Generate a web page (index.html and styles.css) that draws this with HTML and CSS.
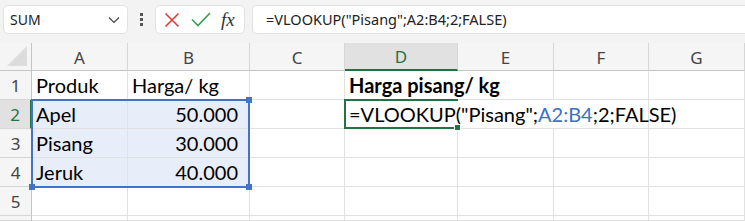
FILE: index.html
```html
<!DOCTYPE html>
<html lang="id">
<head>
    <meta charset="UTF-8">
    <title>VLOOKUP</title>
    <link rel="stylesheet" href="styles.css">
</head>
<body>
    <div class="toolbar">
        <div class="namebox">
            <span>SUM</span>
            <svg width="12" height="8" viewBox="0 0 12 8"><path d="M1 1.5 L6 6.5 L11 1.5" fill="none" stroke="#444" stroke-width="1.2"/></svg>
        </div>
        <div class="grip"><i></i><i></i><i></i></div>
        <div class="fxbox">
            <svg width="16" height="16" viewBox="0 0 16 16"><path d="M1.5 1.5 L14.5 14.5 M14.5 1.5 L1.5 14.5" stroke="#e03c3c" stroke-width="1.6"/></svg>
            <svg width="20" height="15" viewBox="0 0 20 15"><path d="M1 7.5 L7 13.5 L19 1" fill="none" stroke="#3a9d55" stroke-width="1.7"/></svg>
            <span class="fx">fx</span>
        </div>
        <div class="formula">=VLOOKUP("Pisang";A2:B4;2;FALSE)</div>
    </div>

    <div class="sheet">
        <div class="hd corner"><div class="tri"></div></div>
        <div class="hd col">A</div>
        <div class="hd col">B</div>
        <div class="hd col">C</div>
        <div class="hd col active">D</div>
        <div class="hd col">E</div>
        <div class="hd col">F</div>
        <div class="hd col">G</div>

        <div class="hd row">1</div>
        <div class="c">Produk</div>
        <div class="c">Harga/ kg</div>
        <div class="c"></div>
        <div class="c bold span2">Harga pisang/ kg</div>
        <div class="c"></div>
        <div class="c"></div>

        <div class="hd row active">2</div>
        <div class="c sel">Apel</div>
        <div class="c sel num">50.000</div>
        <div class="c"></div>
        <div class="c span3 over">=VLOOKUP("Pisang";<span class="ref">A2:B4</span>;2;FALSE)</div>
        <div class="c"></div>

        <div class="hd row">3</div>
        <div class="c sel">Pisang</div>
        <div class="c sel num">30.000</div>
        <div class="c"></div>
        <div class="c"></div>
        <div class="c"></div>
        <div class="c"></div>
        <div class="c"></div>

        <div class="hd row">4</div>
        <div class="c sel">Jeruk</div>
        <div class="c sel num">40.000</div>
        <div class="c"></div>
        <div class="c"></div>
        <div class="c"></div>
        <div class="c"></div>
        <div class="c"></div>

        <div class="hd row">5</div>
        <div class="c"></div>
        <div class="c"></div>
        <div class="c"></div>
        <div class="c"></div>
        <div class="c"></div>
        <div class="c"></div>
        <div class="c"></div>

        <div class="hd row"></div>
        <div class="c"></div>
        <div class="c"></div>
        <div class="c"></div>
        <div class="c"></div>
        <div class="c"></div>
        <div class="c"></div>
        <div class="c"></div>

        <!-- range highlight A2:B4 -->
        <div class="range">
            <i class="h tr"></i><i class="h bl"></i><i class="h br"></i>
        </div>
        <!-- active cell D2 -->
        <div class="cursor"><i class="fill"></i></div>
    </div>
</body>
</html>
```

FILE: styles.css
```css
body {
    margin: 0;
    width: 745px;
    height: 221px;
    overflow: hidden;
    background: #fff;
}
.toolbar {
    display: flex;
    align-items: center;
    height: 43px;
    padding: 0 0 4px 3px;
    box-sizing: border-box;
    background: #f3f3f3;
    font-family: "Noto Sans", "Open Sans", sans-serif;
    color: #222;
}
.namebox {
    display: flex;
    align-items: center;
    justify-content: space-between;
    width: 125px;
    height: 29px;
    box-sizing: border-box;
    padding: 0 7px 0 6px;
    background: #fff;
    border: 1px solid #e2e2e2;
    border-radius: 5px;
    font-size: 14px;
}
.grip {
    display: flex;
    flex-direction: column;
    gap: 2px;
    width: 27px;
    align-items: center;
}
.grip i {
    display: block;
    width: 3px;
    height: 3px;
    background: #555;
}
.fxbox {
    display: flex;
    align-items: center;
    gap: 11px;
    width: 90px;
    height: 29px;
    box-sizing: border-box;
    padding-left: 8px;
    background: #fff;
    border: 1px solid #e2e2e2;
    border-radius: 5px;
}
.fx {
    font-family: "Liberation Serif", serif;
    font-style: italic;
    font-size: 19px;
    color: #333;
    margin-left: -1px;
}
.formula {
    flex: 1;
    height: 29px;
    margin-left: 7px;
    box-sizing: border-box;
    padding-left: 13px;
    line-height: 27px;
    background: #fff;
    border: 1px solid #e2e2e2;
    border-right: none;
    border-radius: 5px 0 0 5px;
    font-size: 14.5px;
    white-space: nowrap;
}

.sheet {
    position: relative;
    display: grid;
    grid-template-columns: 32px 96px 122px 95px 113px 96px 95px 96px;
    grid-template-rows: 28px repeat(5, 29px) 5px;
    font-family: Lato, "Open Sans", sans-serif;
}
.hd {
    background: #f5f5f5;
    color: #444;
    font-family: "Noto Sans", "Open Sans", sans-serif;
    font-size: 17px;
    box-sizing: border-box;
    display: flex;
    align-items: center;
    justify-content: center;
}
.col {
    border-right: 1px solid #d6d6d6;
    border-bottom: 1px solid #c4c4c4;
    padding-top: 1px;
}
.col.active {
    background: #e1e1e1;
    color: #217346;
    border-bottom: 2px solid #217346;
}
.row {
    border-right: 1px solid #c4c4c4;
    border-bottom: 1px solid #d6d6d6;
}
.row.active {
    background: #e1e1e1;
    color: #217346;
    border-right: 2px solid #217346;
}
.corner {
    border-right: 1px solid #c4c4c4;
    border-bottom: 1px solid #c4c4c4;
    align-items: flex-end;
    justify-content: flex-end;
    padding: 0 4px 4px 0;
}
.tri {
    width: 0;
    height: 0;
    border-left: 20px solid transparent;
    border-bottom: 20px solid #dcdcdc;
}
.c {
    box-sizing: border-box;
    border-right: 1px solid #e1e1e1;
    border-bottom: 1px solid #e1e1e1;
    display: flex;
    align-items: flex-end;
    padding: 0 4px 3px 4px;
    font-size: 20px;
    line-height: 22px;
    color: #000;
    white-space: nowrap;
}
.c.num {
    justify-content: flex-end;
    padding-right: 11px;
}
.c.sel {
    background: #e8eef9;
}
.c.bold {
    font-weight: bold;
}
.span2 {
    grid-column: span 2;
}
.span3 {
    grid-column: span 3;
}
.ref {
    color: #3b70c4;
}
.range {
    position: absolute;
    left: 31px;
    top: 56px;
    width: 219px;
    height: 89px;
    box-sizing: border-box;
    border: 2px solid #4472c4;
}
.range .h {
    position: absolute;
    width: 6px;
    height: 6px;
    background: #4472c4;
}
.range .tr { right: -4px; top: -4px; }
.range .bl { left: -4px; bottom: -4px; }
.range .br { right: -4px; bottom: -4px; }
.cursor {
    position: absolute;
    left: 344px;
    top: 56px;
    width: 114px;
    height: 30px;
    box-sizing: border-box;
    border: 2px solid #217346;
    border-right: none;
}
.cursor .fill {
    position: absolute;
    right: -3px;
    bottom: -4px;
    width: 5px;
    height: 5px;
    background: #217346;
    border: 1px solid #fff;
}
```
